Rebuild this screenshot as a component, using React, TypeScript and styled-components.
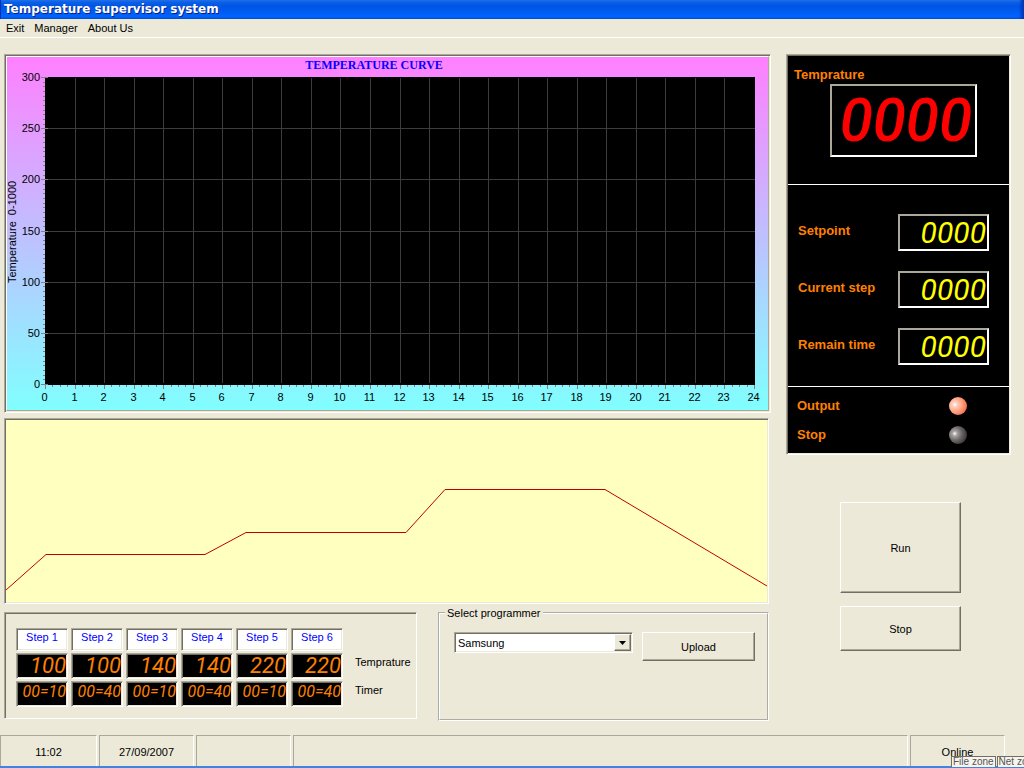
import React from "react";
import styled, { createGlobalStyle, css } from "styled-components";

const face = "#ece9d8";
const shade = "#aca899";
const darkShade = "#716f64";

const GlobalStyle = createGlobalStyle`
  *, *::before, *::after { box-sizing: border-box; }
  body {
    margin: 0;
    background: ${face};
    color: #000;
    font: 11px/14px "Liberation Sans", Arial, sans-serif;
  }
  button, select { font: inherit; color: inherit; }
`;

const sunken = css`
  border: 1px solid;
  border-color: ${shade} #fff #fff ${shade};
  box-shadow: inset 1px 1px ${darkShade}, inset -1px -1px ${face};
  padding: 1px;
`;

const Window = styled.div`
  display: flex;
  flex-direction: column;
  min-height: 100vh;
  border-bottom: 2px solid #3f84e0;
`;

const TitleBar = styled.header`
  height: 19px;
  padding-left: 4px;
  background: linear-gradient(#3d95ff 0, #0a62ea 2px, #0054e3 6px, #005cf2 12px, #0066ff 17px, #005af0 19px);
  box-shadow: inset 1px 0 #0030b8, inset -3px 0 3px #0038b8;
`;

const Title = styled.h1`
  margin: 0;
  color: #fff;
  font: bold 12px/19px "DejaVu Sans", Verdana, sans-serif;
  text-shadow: 1px 1px #0a1f80;
`;

const MenuBar = styled.nav`
  display: flex;
  gap: 10px;
  height: 19px;
  padding: 0 6px;
  border-bottom: 1px solid #fff;
`;

const MenuItem = styled.button`
  padding: 0;
  border: 0;
  background: none;
  line-height: 18px;
`;

const Workspace = styled.main`
  flex: 1;
  display: grid;
  grid-template-columns: minmax(0, 1fr) 225px;
  gap: 15px;
  align-items: start;
  padding: 16px 13px 13px 4px;
`;

const Plots = styled.div`
  display: flex;
  flex-direction: column;
  gap: 5px;
`;

const CurvePanel = styled.section`
  ${sunken}
`;

const CurveFace = styled.div`
  border: 1px solid;
  border-color: #fff ${shade} ${shade} #fff;
  background: linear-gradient(#ff80ff, #80ffff);
`;

const Drawing = styled.svg`
  display: block;
  width: 100%;
  height: auto;
`;

const AxisText = styled.text`
  font: 11px "Liberation Sans", Arial, sans-serif;
`;

const CurveTitle = styled.text`
  font: bold 12px "Liberation Serif", "Times New Roman", serif;
  fill: #00f;
`;

const Lower = styled.div`
  display: flex;
  flex-direction: column;
  gap: 3px;
  padding-right: 2px;
`;

const ProfilePanel = styled.section`
  ${sunken}
  background: #ffffc0;
`;

const SetupRow = styled.div`
  display: flex;
  align-items: flex-start;
  gap: 21px;
`;

const StepsPanel = styled.section`
  ${sunken}
  flex: none;
  width: 413px;
  height: 107px;
  margin-top: 5px;
  padding: 13px 8px;
`;

const StepTable = styled.table`
  border-collapse: separate;
  border-spacing: 3px 2px;

  th, td {
    padding: 0;
    font-weight: normal;
    text-align: left;
    vertical-align: top;
  }
`;

const StepName = styled.div`
  ${sunken}
  width: 52px;
  height: 23px;
  background: #fff;
  color: #00f;
  text-align: center;
`;

const StepValue = styled.div<{ $small?: boolean }>`
  ${sunken}
  width: 52px;
  height: 26px;
  background: #000;
  color: #ff8000;
  font: italic ${(p) => (p.$small ? "16px/18px" : "22px/22px")} Roboto, sans-serif;
  text-align: right;
  white-space: nowrap;
`;

const RowName = styled.div`
  padding-left: 9px;
  line-height: 18px;
`;

const Group = styled.fieldset`
  flex: 1;
  min-width: 0;
  height: 114px;
  display: flex;
  align-items: flex-start;
  gap: 9px;
  margin: 0;
  padding: 13px 12px 0 14px;
  border: 2px groove #fff;
`;

const GroupName = styled.legend`
  margin-left: -9px;
  padding: 0 2px;
  line-height: 12px;
`;

const Combo = styled.div`
  ${sunken}
  position: relative;
  flex: 1;
  min-width: 0;
  height: 21px;
  background: #fff;
`;

const ComboSelect = styled.select`
  appearance: none;
  display: block;
  width: 100%;
  height: 17px;
  padding: 0 18px 0 2px;
  border: 0;
  background: transparent;
  outline: none;
`;

const raised = css`
  border: 1px solid;
  border-color: #fff ${darkShade} ${darkShade} #fff;
  box-shadow: inset -1px -1px ${shade};
  background: ${face};
`;

const ComboArrow = styled.span`
  ${raised}
  position: absolute;
  top: 1px;
  right: 1px;
  width: 17px;
  height: 17px;
  display: grid;
  place-items: center;
  pointer-events: none;
`;

const PushButton = styled.button<{ $width: number; $height: number }>`
  ${raised}
  flex: none;
  width: ${(p) => p.$width}px;
  height: ${(p) => p.$height}px;
  padding: 0;
`;

const Side = styled.aside`
  display: flex;
  flex-direction: column;
  gap: 47px;
`;

const Monitor = styled.section`
  ${sunken}
  background: #000;
  color: #ff8000;
  font-size: 13px;
  line-height: 16px;
  font-weight: bold;
`;

const MainReading = styled.div`
  height: 129px;
  padding: 11px 32px 0 6px;
  border-bottom: 1px solid #fff;
`;

const Readings = styled.div`
  display: flex;
  flex-direction: column;
  gap: 20px;
  height: 202px;
  padding: 29px 20px 0 10px;
  border-bottom: 1px solid #fff;
`;

const Reading = styled.div`
  display: flex;
  justify-content: space-between;
`;

const ReadingName = styled.span`
  line-height: 34px;
`;

const Digits = styled.output<{ $large?: boolean }>`
  display: block;
  border: 2px solid;
  border-color: ${shade} #fff #fff ${shade};
  color: ${(p) => (p.$large ? "#f00" : "#ff0")};
  width: ${(p) => (p.$large ? 147 : 91)}px;
  height: ${(p) => (p.$large ? 73 : 37)}px;
  margin: ${(p) => (p.$large ? "1px 0 0 36px" : "0")};
  padding-right: ${(p) => (p.$large ? "3px" : "1px")};
  font: italic ${(p) => (p.$large ? "500 60px/70px" : "30px/34px")} Roboto, sans-serif;
  text-align: right;
`;

const Lamps = styled.div`
  height: 66px;
  padding: 4px 42px 0 9px;
`;

const LampRow = styled.div`
  display: flex;
  align-items: center;
  justify-content: space-between;
  height: 29px;
`;

const Lamp = styled.span<{ $on?: boolean }>`
  width: 18px;
  height: 18px;
  border-radius: 50%;
  background: ${(p) =>
    p.$on
      ? "radial-gradient(circle at 32% 42%, #fff 0, #ffd0bc 15%, #ff9a78 50%, #f06040 85%, #a04028 100%)"
      : "radial-gradient(circle at 32% 42%, #fff 0, #a8a4a4 15%, #686464 45%, #302c2c 85%, #181414 100%)"};
`;

const Commands = styled.div`
  display: flex;
  flex-direction: column;
  gap: 13px;
  padding-left: 54px;
`;

const StatusBar = styled.footer`
  position: relative;
  display: flex;
  gap: 2px;
  height: 31px;
  padding-right: 19px;
`;

const StatusCell = styled.div<{ $width?: number }>`
  flex: ${(p) => (p.$width ? `0 0 ${p.$width}px` : "1")};
  border: solid;
  border-width: 1px 1px 0 1px;
  border-color: ${shade} #fff ${shade} ${shade};
  text-align: center;
  line-height: 32px;
`;

const Zones = styled.div`
  position: absolute;
  right: 0;
  bottom: -1px;
  display: flex;
  gap: 1px;
  width: 73px;
  height: 11px;
  overflow: hidden;
`;

const Zone = styled.span`
  flex: none;
  border: 1px solid #716f64;
  border-bottom: 0;
  padding: 0 1px;
  background: #f6f4ec;
  color: #555;
  font-size: 10px;
  line-height: 10px;
  white-space: nowrap;
`;

const steps = [
  { name: "Step 1", temperature: "100", timer: "00=10" },
  { name: "Step 2", temperature: "100", timer: "00=40" },
  { name: "Step 3", temperature: "140", timer: "00=10" },
  { name: "Step 4", temperature: "140", timer: "00=40" },
  { name: "Step 5", temperature: "220", timer: "00=10" },
  { name: "Step 6", temperature: "220", timer: "00=40" },
];

const range = (n: number) => Array.from({ length: n }, (_, i) => i);

/* Plot area inside the curve drawing */
const plot = { left: 38, top: 20, width: 710, height: 308 };
const hourX = (h: number) => Math.round(plot.left + (h * 709) / 24) + 0.5;
const degreeY = (d: number) => Math.round(plot.top + 307 - (d * 307) / 300) + 0.5;

function TemperatureCurve() {
  const bottom = plot.top + plot.height;
  return (
    <Drawing viewBox="0 0 761 353" role="img" aria-label="Temperature curve">
      <CurveTitle x="367" y="12" textAnchor="middle">TEMPERATURE CURVE</CurveTitle>
      <rect x={plot.left} y={plot.top} width={plot.width} height={plot.height} fill="#000" />
      <g stroke="#3c3c3c">
        {range(23).map((i) => (
          <line key={i} x1={hourX(i + 1)} x2={hourX(i + 1)} y1={plot.top + 1} y2={bottom - 2} />
        ))}
        {range(5).map((i) => {
          const y = degreeY((i + 1) * 50);
          return <line key={i} x1={plot.left} x2={plot.left + plot.width} y1={y} y2={y} />;
        })}
      </g>
      <g stroke="#808080">
        {range(97).map((i) => (
          <line key={i} x1={hourX(i / 4)} x2={hourX(i / 4)} y1={bottom} y2={bottom + (i % 4 ? 2 : 4)} />
        ))}
        {range(67).map((i) => {
          const y = degreeY((i * 50) / 11);
          const major = i % 11 === 0;
          return <line key={i} x1={plot.left - (major ? 4 : 2)} x2={plot.left + (major ? 3 : 0)} y1={y} y2={y} />;
        })}
      </g>
      {range(25).map((h) => (
        <AxisText key={h} x={hourX(h) - 1} y={bottom + 16} textAnchor="middle">{h}</AxisText>
      ))}
      {range(7).map((i) => (
        <AxisText key={i} x={plot.left - 5} y={degreeY(i * 50) + 3} textAnchor="end">{i * 50}</AxisText>
      ))}
      <AxisText transform="translate(9 226) rotate(-90)" style={{ whiteSpace: "pre" }}>
        {"Temperature  0-1000"}
      </AxisText>
    </Drawing>
  );
}

export default function App() {
  return (
    <Window>
      <GlobalStyle />
      <TitleBar>
        <Title>Temperature supervisor system</Title>
      </TitleBar>
      <MenuBar>
        <MenuItem>Exit</MenuItem>
        <MenuItem>Manager</MenuItem>
        <MenuItem>About Us</MenuItem>
      </MenuBar>

      <Workspace>
        <Plots>
          <CurvePanel>
            <CurveFace>
              <TemperatureCurve />
            </CurveFace>
          </CurvePanel>
          <Lower>
            <ProfilePanel>
              <Drawing viewBox="0 0 761 182" role="img" aria-label="Programme profile">
                <polyline
                  points="0,170 40,134.5 199,134.5 240,112.5 400,112.5 439,69.5 599,69.5 761,166"
                  fill="none"
                  stroke="#c00000"
                />
              </Drawing>
            </ProfilePanel>
            <SetupRow>
              <StepsPanel>
                <StepTable>
                  <thead>
                    <tr>
                      {steps.map((s) => (
                        <th key={s.name} scope="col"><StepName>{s.name}</StepName></th>
                      ))}
                      <td />
                    </tr>
                  </thead>
                  <tbody>
                    <tr>
                      {steps.map((s) => (
                        <td key={s.name}><StepValue>{s.temperature}</StepValue></td>
                      ))}
                      <th scope="row"><RowName>Temprature</RowName></th>
                    </tr>
                    <tr>
                      {steps.map((s) => (
                        <td key={s.name}><StepValue $small>{s.timer}</StepValue></td>
                      ))}
                      <th scope="row"><RowName>Timer</RowName></th>
                    </tr>
                  </tbody>
                </StepTable>
              </StepsPanel>
              <Group>
                <GroupName>Select programmer</GroupName>
                <Combo>
                  <ComboSelect aria-label="Select programmer" defaultValue="Samsung">
                    <option>Samsung</option>
                  </ComboSelect>
                  <ComboArrow>
                    <svg width="7" height="4" aria-hidden="true">
                      <path d="M0 0h7L3.5 4z" />
                    </svg>
                  </ComboArrow>
                </Combo>
                <PushButton $width={113} $height={29}>Upload</PushButton>
              </Group>
            </SetupRow>
          </Lower>
        </Plots>

        <Side>
          <Monitor>
            <MainReading>
              <label htmlFor="temperature">Temprature</label>
              <Digits id="temperature" $large>0000</Digits>
            </MainReading>
            <Readings>
              {["Setpoint", "Current step", "Remain time"].map((name) => (
                <Reading key={name}>
                  <ReadingName>{name}</ReadingName>
                  <Digits aria-label={name}>0000</Digits>
                </Reading>
              ))}
            </Readings>
            <Lamps>
              <LampRow>Output<Lamp $on /></LampRow>
              <LampRow>Stop<Lamp /></LampRow>
            </Lamps>
          </Monitor>
          <Commands>
            <PushButton $width={121} $height={91}>Run</PushButton>
            <PushButton $width={121} $height={45}>Stop</PushButton>
          </Commands>
        </Side>
      </Workspace>

      <StatusBar>
        <StatusCell $width={97}>11:02</StatusCell>
        <StatusCell $width={95}>27/09/2007</StatusCell>
        <StatusCell $width={95} />
        <StatusCell />
        <StatusCell $width={95}>Online</StatusCell>
        <Zones>
          <Zone>File zone</Zone>
          <Zone>Net zone</Zone>
        </Zones>
      </StatusBar>
    </Window>
  );
}
